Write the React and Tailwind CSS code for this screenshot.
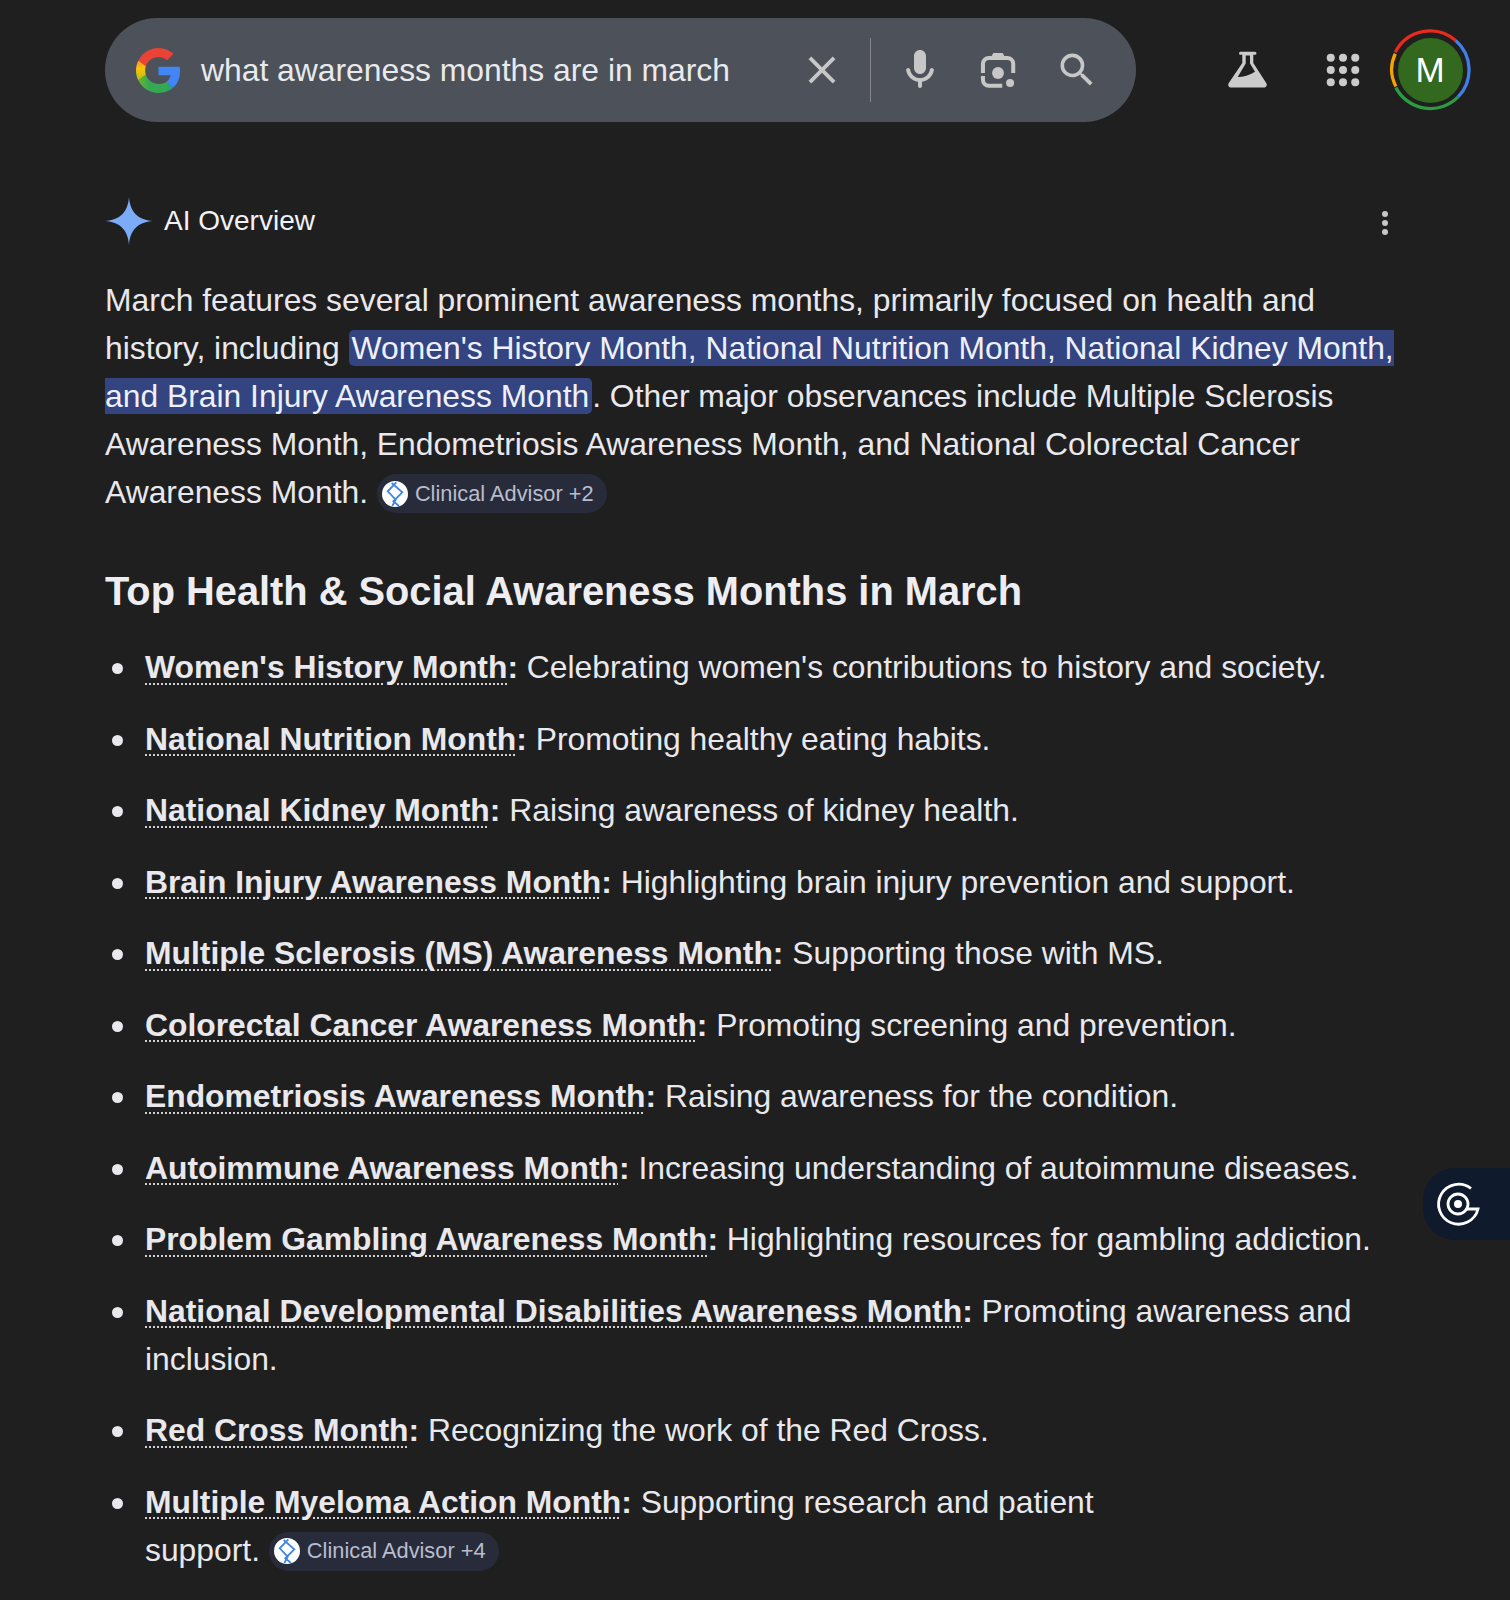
const items = [
  ["Women's History Month", " Celebrating women's contributions to history and society."],
  ["National Nutrition Month", " Promoting healthy eating habits."],
  ["National Kidney Month", " Raising awareness of kidney health."],
  ["Brain Injury Awareness Month", " Highlighting brain injury prevention and support."],
  ["Multiple Sclerosis (MS) Awareness Month", " Supporting those with MS."],
  ["Colorectal Cancer Awareness Month", " Promoting screening and prevention."],
  ["Endometriosis Awareness Month", " Raising awareness for the condition."],
  ["Autoimmune Awareness Month", " Increasing understanding of autoimmune diseases."],
  ["Problem Gambling Awareness Month", " Highlighting resources for gambling addiction."],
  ["National Developmental Disabilities Awareness Month", " Promoting awareness and inclusion."],
  ["Red Cross Month", " Recognizing the work of the Red Cross."],
];

function GoogleG() {
  return (
    <svg viewBox="0 0 48 48" className="w-[45px] h-[45px] shrink-0">
      <defs>
        <linearGradient id="gYellow" x1="0" y1="0" x2="0" y2="1">
          <stop offset="0" stopColor="#f9902a" />
          <stop offset="0.4" stopColor="#fbc405" />
          <stop offset="1" stopColor="#a8c31f" />
        </linearGradient>
        <linearGradient id="gGreen" x1="0" y1="0" x2="1" y2="0">
          <stop offset="0" stopColor="#6cb52c" />
          <stop offset="0.3" stopColor="#34a853" />
          <stop offset="0.8" stopColor="#34a853" />
          <stop offset="1" stopColor="#1f9c9a" />
        </linearGradient>
      </defs>
      <path fill="#4285F4" d="M46.98 24.55c0-1.57-.15-3.09-.38-4.55H24v9.02h12.94c-.58 2.96-2.26 5.48-4.78 7.18l7.73 6c4.51-4.18 7.09-10.36 7.09-17.65z" />
      <path fill="#EA4335" d="M24 9.5c3.54 0 6.71 1.22 9.21 3.6l6.85-6.85C35.9 2.38 30.47 0 24 0 14.62 0 6.51 5.38 2.56 13.22l7.98 6.19C12.43 13.72 17.74 9.5 24 9.5z" />
      <path fill="url(#gYellow)" d="M10.53 28.59c-.48-1.45-.76-2.99-.76-4.59s.27-3.14.76-4.59l-7.98-6.19C.92 16.46 0 20.12 0 24c0 3.88.92 7.54 2.56 10.78l7.97-6.19z" />
      <path fill="url(#gGreen)" d="M24 48c6.48 0 11.93-2.13 15.89-5.81l-7.73-6c-2.15 1.45-4.92 2.3-8.16 2.3-6.26 0-11.57-4.22-13.47-9.91l-7.98 6.19C6.51 42.62 14.62 48 24 48z" />
    </svg>
  );
}

function Material({ d, className }) {
  return (
    <svg viewBox="0 0 24 24" fill="currentColor" className={className}>
      <path d={d} />
    </svg>
  );
}

function Lens() {
  return (
    <svg viewBox="0 0 24 24" className="w-[42px] h-[42px]" fill="none" stroke="currentColor" strokeWidth="2.3">
      <path d="M3.400 13.700V8.500A3.400 3.400 0 0 1 6.800 5.100H17.300A3.400 3.400 0 0 1 20.700 8.500V13.700" />
      <path d="M3.400 15.400V17.600A3.400 3.400 0 0 0 6.800 21H14.400" />
      <path d="M7.500 5.500 9.300 2.300H14.700L16.500 5.500z" fill="currentColor" stroke="none" />
      <circle cx="12" cy="13.700" r="3.400" fill="currentColor" stroke="none" />
      <circle cx="18.900" cy="19.400" r="2.300" fill="currentColor" stroke="none" />
    </svg>
  );
}

function Flask() {
  return (
    <svg viewBox="0 0 80 80" className="w-[80px] h-[80px]" fill="currentColor">
      <path
        fillRule="evenodd"
        d="M30.500 21.700H45A1.500 1.500 0 0 1 45 24.700H43.300V33L56.200 53C57.500 55 56.500 57.500 54 57.500H21C18.500 57.500 17.500 55 18.800 53L32.300 33V24.700H30.500A1.500 1.500 0 0 1 30.500 21.700ZM35.700 25.500V33.500L27.700 47C33 47 40 45 45 41.700L40 33.500V25.500Z"
      />
    </svg>
  );
}

function Apps() {
  const cells = [5, 12, 19];
  return (
    <svg viewBox="0 0 24 24" className="w-[42px] h-[42px]" fill="currentColor">
      {cells.map((y) => cells.map((x) => <circle key={`${x}-${y}`} cx={x} cy={y} r="2.300" />))}
    </svg>
  );
}

function Avatar() {
  return (
    <div className="relative w-[82px] h-[82px] flex items-center justify-center shrink-0">
      <svg viewBox="0 0 80 80" className="absolute inset-0 w-full h-full" fill="none" strokeWidth="3.200">
        <path d="M6.100 22.800A38 38 0 0 1 65 11.200" stroke="#EA2A1C" />
        <path d="M65 11.200A38 38 0 0 1 67.400 66.300" stroke="#3F7FEA" />
        <path d="M67.400 66.300A38 38 0 0 1 6.700 57.200" stroke="#2B9C3F" />
        <path d="M6.700 56A36 36 0 0 1 6.100 24.200" stroke="#F5A300" />
      </svg>
      <div className="w-[65px] h-[65px] rounded-full bg-[#33691e] text-white flex items-center justify-center text-[35px] font-['Liberation_Sans',sans-serif]">M</div>
    </div>
  );
}

function Sparkle() {
  return (
    <svg viewBox="0 0 48 48" className="w-[48px] h-[48px] shrink-0">
      <path fill="#7cacf8" d="M24 0C25 14 32 23 48 24 32 25 25 34 24 48 23 34 16 25 0 24 16 23 23 14 24 0z" />
    </svg>
  );
}

function Chip({ label }) {
  return (
    <span className="inline-flex items-center align-middle h-[39px] -translate-y-px rounded-full bg-[#282c3a] pl-[5px] pr-[13px] gap-[7px] text-[21.800px] leading-none text-[#b9bdce]">
      <svg viewBox="0 0 26 26" className="w-[26px] h-[26px] shrink-0">
        <circle cx="13" cy="13" r="13" fill="#fff" />
        <path d="M14.300 1.300 5.700 10.300 13.700 18.700 10.300 25M9.700 2 20.300 11.300 11.300 20.300 17 25" fill="none" stroke="#3f86e0" strokeWidth="1.800" />
      </svg>
      {label}
    </span>
  );
}

function Bold({ children }) {
  return (
    <strong className="font-bold">
      <span className="underline decoration-dotted decoration-2 decoration-[#d0d0d5] underline-offset-[5px]">{children}</span>:
    </strong>
  );
}

function Row({ className, children }) {
  return (
    <li className={`flex ${className}`}>
      <span className="w-[11px] h-[11px] shrink-0 rounded-full bg-[#e8e8ed] mt-[20px] ml-[7px] mr-[22px]" />
      <div className="min-w-0">{children}</div>
    </li>
  );
}

export default function App() {
  return (
    <div className="relative h-[1600px] overflow-hidden bg-[#1f1f1f] text-[#e8e8ed] font-['Liberation_Sans',Arial,sans-serif]">
      <header className="flex items-center pt-[18px] pl-[105px]">
        <div className="flex items-center w-[1031px] h-[104px] rounded-full bg-[#4d5159] pl-[31px] text-[#c7c7c7]">
          <GoogleG />
          <span className="ml-[20px] mt-[2px] text-[31.830px] text-[#e8eaed] w-[598px]">what awareness months are in march</span>
          <Material className="w-[46px] h-[46px]" d="M19 6.410L17.590 5 12 10.590 6.410 5 5 6.410 10.590 12 5 17.590 6.410 19 12 13.410 17.590 19 19 17.590 13.410 12z" />
          <div className="w-px h-[64px] bg-[#85878c] ml-[25px]" />
          <div className="ml-[25px]">
            <Material className="w-[48px] h-[48px]" d="M12 14c1.660 0 3-1.340 3-3V5c0-1.660-1.340-3-3-3S9 3.340 9 5v6c0 1.660 1.340 3 3 3zm5.910-3c-.49 0-.9.36-.98.85C16.520 14.200 14.470 16 12 16s-4.520-1.800-4.930-4.150c-.08-.49-.49-.85-.98-.85-.61 0-1.090.54-1 1.140.49 3 2.890 5.350 5.910 5.780V20c0 .55.45 1 1 1s1-.45 1-1v-2.080c3.020-.43 5.420-2.780 5.910-5.780.1-.6-.39-1.140-1-1.140z" />
          </div>
          <div className="ml-[33px]"><Lens /></div>
          <div className="ml-[36px]">
            <Material className="w-[44px] h-[44px]" d="M15.500 14h-.79l-.28-.27A6.471 6.471 0 0 0 16 9.500 6.500 6.500 0 1 0 9.500 16c1.610 0 3.090-.59 4.230-1.570l.27.28v.79l5 4.990L20.490 19l-4.990-5zm-6 0C7.010 14 5 11.990 5 9.500S7.010 5 9.500 5 14 7.010 14 9.500 11.990 14 9.500 14z" />
          </div>
        </div>
        <div className="ml-[74px] text-[#cbcbcb]"><Flask /></div>
        <div className="ml-[32px] text-[#cbcbcb]"><Apps /></div>
        <div className="ml-[25px]"><Avatar /></div>
      </header>

      <main className="pl-[105px] pr-[95px]">
        <div className="flex items-center justify-between mt-[75px]">
          <div className="flex items-center gap-[11px]">
            <Sparkle />
            <span className="text-[28px] text-[#f1f3f8]">AI Overview</span>
          </div>
          <svg viewBox="0 0 8 26" className="w-[8px] h-[26px] text-[#c7c7c7] mr-[26px] mt-[3px]" fill="currentColor">
            <circle cx="4" cy="4" r="3" />
            <circle cx="4" cy="13" r="3" />
            <circle cx="4" cy="22" r="3" />
          </svg>
        </div>

        <p className="mt-[31px] text-[31.830px] leading-[48px]">
          March features several prominent awareness months, primarily focused on health and history, including{" "}
          <mark className="bg-[#334480] text-[#eef0fb] rounded-[5px] px-[3px] box-decoration-slice">
            Women's History Month, National Nutrition Month, National Kidney Month, and Brain Injury Awareness Month
          </mark>
          . Other major observances include Multiple Sclerosis Awareness Month, Endometriosis Awareness Month, and National Colorectal Cancer Awareness Month. <Chip label="Clinical Advisor +2" />
        </p>

        <h2 className="mt-[51px] text-[39.800px] leading-[48px] font-bold text-[#eeeef2]">Top Health &amp; Social Awareness Months in March</h2>

        <ul className="mt-[28px] text-[31.830px] leading-[48px]">
          {items.map(([head, text]) => (
            <Row key={head} className="mb-[23.500px]">
              <Bold>{head}</Bold>
              {text}
            </Row>
          ))}
          <Row className="pr-[300px]">
            <Bold>Multiple Myeloma Action Month</Bold> Supporting research and patient support. <Chip label="Clinical Advisor +4" />
          </Row>
        </ul>
      </main>

      <div className="absolute right-0 top-[1168px] w-[87px] h-[72px] rounded-l-[32px] bg-[#0f1a2c] flex items-center pl-[11px]">
        <svg viewBox="0 0 48 48" className="w-[48px] h-[48px]" fill="none" stroke="#fff" strokeWidth="2.800">
          <path d="M37 8.500A20 20 0 1 0 44 29H33" />
          <circle cx="24" cy="24" r="10" />
          <circle cx="24" cy="24" r="4" fill="#fff" stroke="none" />
        </svg>
      </div>
    </div>
  );
}
